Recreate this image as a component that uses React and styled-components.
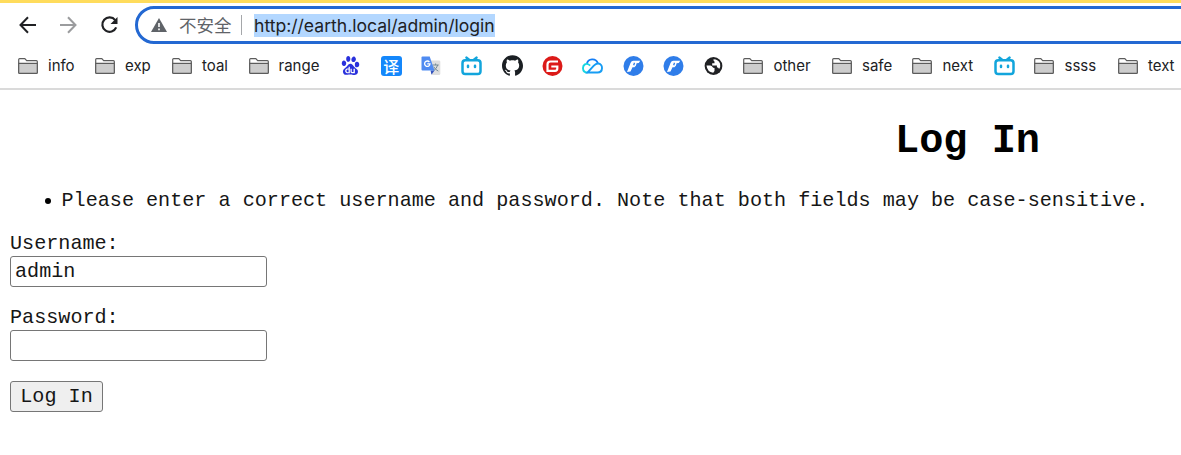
import React from "react";
import styled, { createGlobalStyle } from "styled-components";
import { SiBaidu, SiGithub } from "react-icons/si";

const GlobalStyle = createGlobalStyle`
  * { box-sizing: border-box; }
  body { margin: 0; background: #fff; overflow: hidden; }
`;

const Window = styled.div`
  display: flex;
  flex-direction: column;
  width: 1181px;
  height: 455px;
  overflow: hidden;
  background: #fff;
`;

const Chrome = styled.header`
  display: flex;
  flex-direction: column;
  flex: none;
  height: 90px;
  border-top: 3px solid #ffdc5c;
  border-bottom: 2px solid #dadada;
  font-family: Inter, "Noto Sans CJK SC", sans-serif;
`;

const Toolbar = styled.div`
  display: flex;
  height: 42px;
  padding: 3px 0 1px 18px;
`;

const NavButton = styled.span`
  display: flex;
  align-items: center;
  width: ${(p) => p.$width}px;
  color: ${(p) => (p.$muted ? "#9b9c9e" : "#202124")};
`;

const AddressBar = styled.div`
  display: flex;
  align-items: center;
  flex: 1;
  margin-right: -30px;
  padding-left: 13px;
  border: 3px solid #2368d2;
  border-radius: 19px;
`;

const Security = styled.span`
  width: 53px;
  margin-left: 12px;
  font-family: "Noto Sans CJK SC", sans-serif;
  font-size: 17.5px;
  line-height: 24px;
  color: #5f6368;
  white-space: nowrap;
`;

const Divider = styled.span`
  width: 1px;
  height: 20px;
  margin: 0 12px 0 9px;
  background: #a5a7aa;
`;

const Url = styled.span`
  width: 241px;
  height: 23px;
  background: #b3d7ff;
  color: #202124;
  font-size: 17.6px;
  line-height: 23px;
  letter-spacing: -0.02px;
  white-space: nowrap;
`;

const Bookmarks = styled.nav`
  display: flex;
  align-items: center;
  height: 41px;
  padding-left: 18px;
`;

const Bookmark = styled.span`
  display: flex;
  align-items: center;
  flex: none;
  gap: 10px;
  width: ${(p) => p.$width}px;
  color: ${(p) => p.$color || "#202124"};
  font-size: 15px;
  line-height: 20px;
  white-space: nowrap;
  svg { flex: none; }
`;

const TranslateTile = styled.span`
  display: flex;
  align-items: center;
  justify-content: center;
  width: 21px;
  height: 20px;
  border-radius: 3px;
  background: #1487fb;
  color: #fff;
  font: 500 16px/20px "Noto Sans CJK SC", sans-serif;
`;

const Page = styled.main`
  display: flex;
  flex-direction: column;
  align-items: flex-start;
  padding: 28px 0 0 10px;
  color: #161616;
  font-family: "Courier New", "Liberation Mono", monospace;
  font-size: 20.14px;
  line-height: 24px;
`;

const Title = styled.h1`
  width: 1915px;
  margin: 0;
  color: #000;
  font-size: 40.3px;
  line-height: 46px;
  text-align: center;
`;

const Errors = styled.ul`
  margin: 25px 0 19px;
  padding: 0;
  list-style: none;
  white-space: nowrap;
`;

const ErrorItem = styled.li`
  display: flex;
  align-items: center;
  padding-left: 35px;

  &::before {
    content: "";
    width: 6px;
    height: 6px;
    margin-right: 10.5px;
    border-radius: 50%;
    background: #000;
  }
`;

const Field = styled.label`
  display: flex;
  flex-direction: column;
  margin-bottom: ${(p) => p.$gap}px;
`;

const Input = styled.input`
  width: 257px;
  height: 31px;
  padding: 0 4px 1px;
  border: 1.3px solid #767676;
  border-radius: 3px;
  outline: none;
  background: #fff;
  color: #161616;
  font: inherit;
`;

const Submit = styled.button`
  width: 93px;
  height: 31px;
  padding: 0;
  border: 1.3px solid #767676;
  border-radius: 3px;
  background: #efefef;
  color: #161616;
  font: inherit;
`;

const Arrow = ({ flip }) => (
  <svg width="20" height="20" viewBox="0 0 20 20" fill="none" stroke="currentColor" strokeWidth="2" transform={flip ? "scale(-1 1)" : undefined}>
    <path d="M18 10H3M10 2.3L2.5 10l7.5 7.7" />
  </svg>
);

const Reload = () => (
  <svg width="21" height="20" viewBox="0 0 21 20">
    <path d="M16.2 5.1A7.2 7.2 0 1 0 17.200 12.400" fill="none" stroke="currentColor" strokeWidth="2.2" />
    <path d="M18.500 2v7h-7z" fill="currentColor" />
  </svg>
);

const Warning = () => (
  <svg width="16" height="14" viewBox="0 0 16 14">
    <path d="M8 0l8 14H0z" fill="#5f6368" />
    <path d="M8 5v4M8 10.4v1.8" stroke="#fff" strokeWidth="1.6" />
  </svg>
);

const FolderIcon = () => (
  <svg width="20" height="16" viewBox="0 0 20 16">
    <path d="M.7 14.5V1.6Q.7.7 1.6.7h5.2l1.9 2h9.7q.9 0 .9.9v10.9q0 .8-.9.8H1.6q-.9 0-.9-.8z" fill="#fff" stroke="#5c5c5c" strokeWidth="1.2" />
    <path d="M.7 5.4h18.6v9.1q0 .8-.9.8H1.6q-.9 0-.9-.8z" fill="#cdcdcd" stroke="#5c5c5c" strokeWidth="1.2" />
  </svg>
);

const VideoIcon = () => (
  <svg width="21" height="20" viewBox="0 0 21 20" fill="none" stroke="#12a5dc" strokeWidth="2.5" strokeLinecap="round">
    <rect x="1.5" y="4.2" width="18" height="13.8" rx="2.8" />
    <path d="M5.500 1.600l2.500 2.200M15.500 1.600l-2.500 2.200M7 9.800v1.200M14 9.800v1.200" />
  </svg>
);

const GoogleTranslate = () => (
  <svg width="20" height="20" viewBox="0 0 20 20">
    <path d="M8 4.5h10q1.3 0 1.3 1.2v12q0 1.2-1.3 1.2h-7z" fill="#dedede" />
    <path d="M11.5 9h6.2M14.6 7.5V9M16.7 9q-1 3.8-4.2 5.8M12.7 10.7q1.6 3 4.6 4.4" fill="none" stroke="#748a95" />
    <path d="M9.5 14.5h4l-3 4.3z" fill="#3453bd" />
    <path d="M1.5.6h7.2l4.8 14H1.5Q.5 14.6.5 13.5V1.6Q.5.6 1.5.6z" fill="#4f8bf1" />
    <path d="M8.4 6A2.7 2.7 0 1 0 9 7.8H6.3" fill="none" stroke="#fff" strokeWidth="1.3" />
  </svg>
);

const RedBadge = () => (
  <svg width="21" height="20" viewBox="0 0 20 20">
    <circle cx="10" cy="10" r="10" fill="#dc1a18" />
    <path d="M15.500 5.500H8Q5 5.500 5 8.500v6.300h7.500q2.300 0 2.300-2.300v-2H8.800" fill="none" stroke="#fff" strokeWidth="2.200" />
  </svg>
);

const CloudIcon = () => (
  <svg width="21" height="16" viewBox="0 0 21 16" fill="none" strokeWidth="1.9">
    <path d="M4.8 6A5.7 5.7 0 0 1 15.8 5.3" stroke="#147df5" />
    <path d="M8.2 7.6C3.7 3.700.9 7.300 1 10.200c.1 3 2.400 4.300 4.700 4.300" stroke="#16d5e2" />
    <path d="M5.500 14.500h10c5.900 0 5.900-8.600.6-9q-2.200-.1-4.500 2.400L5.500 14.500z" stroke="#179df4" />
  </svg>
);

const FBadge = () => (
  <svg width="21" height="20" viewBox="0 0 20 20">
    <circle cx="10" cy="10" r="10" fill="#2f7de9" />
    <path d="M3.500 16L7 7Q7.800 4.800 10 4.800h6.700l-1.400 2.100-2.200.4-.7 2.400-1.500 1.500H9L7 15.500z" fill="#fff" />
    <path d="M11 6.800l-.8 2.400" stroke="#2f7de9" strokeWidth="1.300" />
  </svg>
);

const Globe = () => (
  <svg width="20" height="20" viewBox="0 0 20 20">
    <circle cx="10.500" cy="10" r="8.900" fill="#202124" />
    <path d="M3.500 9.500h3.800q1.700 0 2.200 1.500.4 1 2 1v3l-1.300 1.700Q4.200 16 3.500 9.500z" fill="#fff" />
    <path d="M10.500 3.200q5 0 6.600 4.600.7 3-1 5.200-.6-1.800-2.200-1.800V9.500H9.200V7.200h2.300V5.500q-1.300-.4-1-2.300z" fill="#fff" />
  </svg>
);

const folders = [["info", 77], ["exp", 77], ["toal", 76.5], ["range", 92]];
const moreFolders = [["other", 88.5], ["safe", 80.5], ["next", 82]];
const lastFolders = [["ssss", 83.5], ["text", 63]];

const Folders = ({ items }) => items.map(([name, width]) => (
  <Bookmark key={name} $width={width}><FolderIcon />{name}</Bookmark>
));

export default function App() {
  return (
    <Window>
      <GlobalStyle />
      <Chrome>
        <Toolbar>
          <NavButton $width={40}><Arrow /></NavButton>
          <NavButton $width={41} $muted><Arrow flip /></NavButton>
          <NavButton $width={36}><Reload /></NavButton>
          <AddressBar>
            <Warning />
            <Security>不安全</Security>
            <Divider />
            <Url>http://earth.local/admin/login</Url>
          </AddressBar>
        </Toolbar>
        <Bookmarks>
          <Folders items={folders} />
          <Bookmark $width={40.3} $color="#2930dc"><SiBaidu size={19} /></Bookmark>
          <Bookmark $width={40.3}><TranslateTile>译</TranslateTile></Bookmark>
          <Bookmark $width={40.3}><GoogleTranslate /></Bookmark>
          <Bookmark $width={40.3}><VideoIcon /></Bookmark>
          <Bookmark $width={40.3} $color="#1b1f23"><SiGithub size={21} /></Bookmark>
          <Bookmark $width={40.3}><RedBadge /></Bookmark>
          <Bookmark $width={40.3}><CloudIcon /></Bookmark>
          <Bookmark $width={40.3}><FBadge /></Bookmark>
          <Bookmark $width={40.3}><FBadge /></Bookmark>
          <Bookmark $width={40.3}><Globe /></Bookmark>
          <Folders items={moreFolders} />
          <Bookmark $width={40}><VideoIcon /></Bookmark>
          <Folders items={lastFolders} />
        </Bookmarks>
      </Chrome>
      <Page>
        <Title>Log In</Title>
        <Errors>
          <ErrorItem>Please enter a correct username and password. Note that both fields may be case-sensitive.</ErrorItem>
        </Errors>
        <Field $gap={19}>Username:<Input defaultValue="admin" /></Field>
        <Field $gap={20}>Password:<Input type="password" /></Field>
        <Submit>Log In</Submit>
      </Page>
    </Window>
  );
}
